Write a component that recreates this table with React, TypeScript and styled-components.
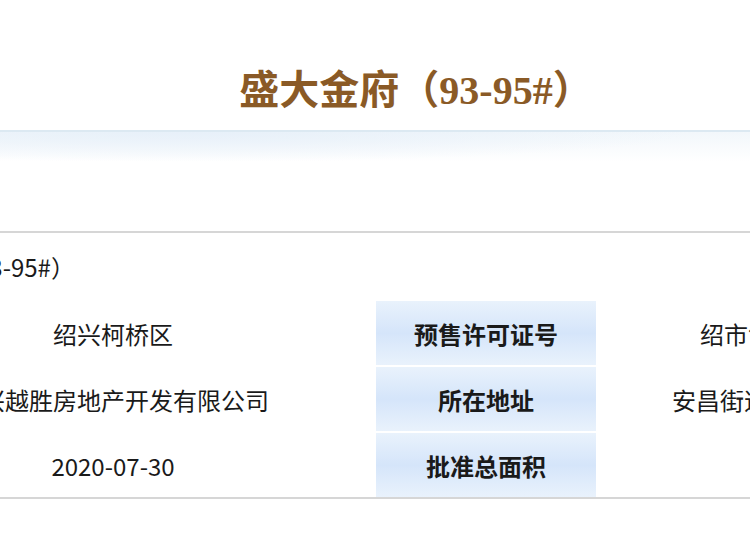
import React from 'react';
import styled, { createGlobalStyle } from 'styled-components';

const GlobalStyle = createGlobalStyle`
  html, body {
    margin: 0;
    padding: 0;
    background: #ffffff;
    overflow: hidden;
  }
  body {
    font-family: "Noto Sans CJK SC", "Liberation Sans", sans-serif;
    color: #1a1a1a;
  }
`;

interface InfoRow {
  label: string;
  value: string;
  label2: string;
  value2: string;
}

const rows: InfoRow[] = [
  { label: '所在区域', value: '绍兴柯桥区', label2: '预售许可证号', value2: '绍市售许字（2020）第0157、0158号' },
  { label: '开发企业', value: '绍兴越胜房地产开发有限公司', label2: '所在地址', value2: '安昌街道安华路与西扆山路交叉口东北地块' },
  { label: '发证日期', value: '2020-07-30', label2: '批准总面积', value2: '' },
];

const App = () => {
  return (
    <>
      <GlobalStyle />
      <Page>
        <Header>
          <Title>盛大金府（93-95#）</Title>
        </Header>
        <Banner />
        <InfoTable>
          <Label />
          <Caption>盛大金府（93-95#）</Caption>
          {rows.map((row) => (
            <React.Fragment key={row.label}>
              <Label>{row.label}</Label>
              <Value>{row.value}</Value>
              <Label>{row.label2}</Label>
              <Value>{row.value2}</Value>
            </React.Fragment>
          ))}
        </InfoTable>
      </Page>
    </>
  );
};

const Page = styled.div`
  width: 1572px;
  margin-left: -370px;
`;

const Header = styled.div`
  height: 130px;
  display: flex;
  justify-content: center;
  align-items: flex-start;
  box-sizing: border-box;
  padding-top: 69px;
`;

const Title = styled.h1`
  margin: 0;
  font-size: 40px;
  line-height: 44px;
  font-weight: bold;
  color: #8a5a26;
  font-family: "Liberation Serif", "Noto Sans CJK SC", serif;
`;

const Banner = styled.div`
  height: 103px;
  box-sizing: border-box;
  border-top: 2px solid #dce9f2;
  border-bottom: 2px solid #d6d6d6;
  background:
    radial-gradient(ellipse 500px 30px at 560px 0, #e7f0f9, rgba(255, 255, 255, 0)),
    linear-gradient(#f2f7fb, #ffffff 30px);
`;

const InfoTable = styled.div`
  display: grid;
  grid-template-columns: 220px 522px 220px 1fr;
  grid-template-rows: 66px repeat(3, 64px);
  gap: 2px;
  border-bottom: 2px solid #d6d6d6;
`;

const Label = styled.div`
  display: flex;
  align-items: center;
  justify-content: center;
  font-size: 24px;
  font-weight: bold;
  color: #1a1a1a;
  background: linear-gradient(#e9f2fc, #d5e5fa 50%, #e9f2fc);
`;

const Caption = styled.div`
  grid-column: span 3;
  display: flex;
  align-items: center;
  padding-left: 4px;
  font-size: 24px;
`;

const Value = styled.div`
  display: flex;
  align-items: center;
  justify-content: center;
  font-size: 24px;
  white-space: nowrap;
  overflow: hidden;
`;

export default App;
